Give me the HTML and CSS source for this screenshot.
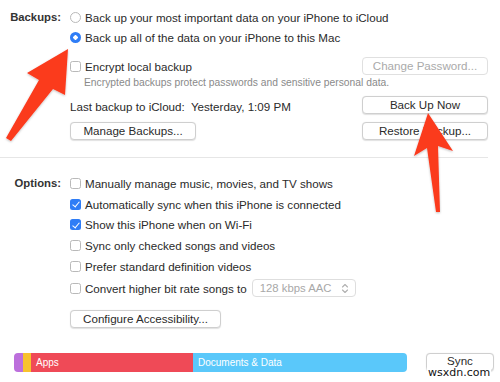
FILE: index.html
```html
<!DOCTYPE html>
<html>
<head>
<meta charset="utf-8">
<link rel="stylesheet" href="styles.css">
</head>
<body>
<div class="pane">
  <section class="group backups">
    <div class="label">Backups:</div>
    <div class="content">
      <div class="opt r1"><span class="radio"></span>Back up your most important data on your iPhone to iCloud</div>
      <div class="opt"><span class="radio on"></span>Back up all of the data on your iPhone to this Mac</div>
      <div class="split enc">
        <div class="opt"><span class="cb"></span>Encrypt local backup</div>
        <button class="btn wide" disabled>Change Password...</button>
      </div>
      <div class="hint">Encrypted backups protect passwords and sensitive personal data.</div>
      <div class="split last">
        <span class="txt">Last backup to iCloud:&nbsp; Yesterday, 1:09 PM</span>
        <button class="btn wide">Back Up Now</button>
      </div>
      <div class="split manage">
        <button class="btn wide">Manage Backups...</button>
        <button class="btn wide">Restore Backup...</button>
      </div>
    </div>
  </section>
  <div class="sep"></div>
  <section class="group options">
    <div class="label">Options:</div>
    <div class="content">
      <div class="opt row"><span class="cb"></span>Manually manage music, movies, and TV shows</div>
      <div class="opt row"><span class="cb on"></span>Automatically sync when this iPhone is connected</div>
      <div class="opt row"><span class="cb on"></span>Show this iPhone when on Wi-Fi</div>
      <div class="opt row"><span class="cb"></span>Sync only checked songs and videos</div>
      <div class="opt row"><span class="cb"></span>Prefer standard definition videos</div>
      <div class="opt row tall"><span class="cb"></span>Convert higher bit rate songs to
        <span class="popup">128 kbps AAC
          <svg class="updown" width="8" height="11" viewBox="0 0 8 11"><path d="M1.5 4 L4 1.5 L6.5 4 M1.5 7 L4 9.5 L6.5 7" fill="none" stroke="#b0b0b0" stroke-width="1.1" stroke-linecap="round" stroke-linejoin="round"/></svg>
        </span>
      </div>
      <button class="btn access">Configure Accessibility...</button>
    </div>
  </section>
  <footer class="foot">
    <div class="bar">
      <span class="seg purple"></span>
      <span class="seg yellow"></span>
      <span class="seg red">Apps</span>
      <span class="seg blue">Documents &amp; Data</span>
    </div>
    <button class="btn sync">Sync</button>
  </footer>
  <span class="watermark">wsxdn.com</span>
  <svg class="arrows" width="500" height="382" viewBox="0 0 500 382">
    <defs>
      <filter id="sh" x="-20%" y="-20%" width="140%" height="140%">
        <feDropShadow dx="0" dy="1" stdDeviation="1.2" flood-color="#000" flood-opacity="0.25"/>
      </filter>
    </defs>
    <polygon filter="url(#sh)" fill="#fb3a1f" points="68,49 65,95 53,89 11,141 6,138 39,80 27,73"/>
    <polygon filter="url(#sh)" fill="#fb3a1f" points="428,113 453,151 438,146 440,212 436,212 427,148 414,156"/>
  </svg>
</div>
</body>
</html>
```
FILE: styles.css
```css
* { box-sizing: border-box; }
html, body { margin: 0; padding: 0; background: #fff; }
body {
  font-family: "Liberation Sans", Arial, sans-serif;
  font-size: 11.6px;
  color: #2a2a2a;
}
.pane {
  position: relative;
  width: 500px;
  height: 382px;
  overflow: hidden;
}
.group {
  display: grid;
  grid-template-columns: 62px 418px;
  column-gap: 8px;
}
.label {
  text-align: right;
  font-weight: bold;
  color: #333;
  padding-right: 1px;
  font-size: 11.3px;
}
.backups { padding-top: 7px; }
.backups .label { line-height: 20px; }
.opt {
  display: flex;
  align-items: center;
  height: 20px;
  white-space: nowrap;
}
.radio {
  width: 11px; height: 11px;
  border-radius: 50%;
  border: 1px solid #b9b9b9;
  background: #fff;
  margin-right: 4px;
  flex: none;
}
.radio.on {
  border: none;
  background: #2f7df6 radial-gradient(circle, #fff 0 2px, transparent 2.4px);
}
.cb {
  width: 11px; height: 11px;
  border-radius: 2.5px;
  border: 1px solid #b9b9b9;
  background: #fff;
  margin-right: 4px;
  flex: none;
  position: relative;
}
.cb.on {
  border: none;
  background: #2f7df6;
}
.cb.on::after {
  content: "";
  position: absolute;
  left: 3.5px; top: 1.5px;
  width: 3px; height: 6px;
  border: solid #fff;
  border-width: 0 1.6px 1.6px 0;
  transform: rotate(40deg);
}
.split {
  display: flex;
  justify-content: space-between;
  align-items: center;
}
.enc { margin-top: 10px; height: 18px; }
.hint {
  margin-top: 2px;
  padding-left: 14px;
  font-size: 10.3px;
  line-height: 12px;
  color: #8a8a8a;
  white-space: nowrap;
}
.last { margin-top: 7px; height: 18px; }
.last .txt { padding-top: 3px; }
.manage { margin-top: 8px; height: 18px; }
.btn {
  font-family: inherit;
  font-size: 11.6px;
  color: #2a2a2a;
  height: 18px;
  padding: 0;
  background: #fff;
  border: 1px solid #cfcfcf;
  border-radius: 4px;
  box-shadow: 0 0.5px 1px rgba(0,0,0,0.12);
  line-height: 16px;
}
.btn.wide { width: 126px; }
.btn[disabled] {
  color: #aaa;
  border-color: #e0e0e0;
  box-shadow: none;
}
.sep {
  height: 1px;
  background: #e6e6e6;
  width: 488px;
  margin-top: 17px;
}
.options { padding-top: 15px; }
.options .label { line-height: 20.7px; }
.opt.row { height: 20.7px; }
.opt.tall { height: 24px; }
.popup {
  display: inline-flex;
  align-items: center;
  justify-content: space-between;
  margin-left: 5px;
  width: 104px;
  height: 18px;
  padding: 0 6px 0 7px;
  border: 1px solid #dedede;
  border-radius: 4px;
  color: #a8a8a8;
  font-size: 11.3px;
}
.btn.access {
  margin-top: 10px;
  width: 151px;
  justify-self: start;
}
.foot {
  position: absolute;
  left: 14px;
  top: 353px;
  display: flex;
  align-items: flex-start;
  gap: 19px;
}
.bar {
  display: flex;
  width: 393px;
  height: 19px;
  border-radius: 4px;
  overflow: hidden;
}
.seg {
  display: flex;
  align-items: center;
  color: #fff;
  font-size: 10px;
  padding-left: 5px;
}
.purple { width: 9px; background: #bc6fdc; padding: 0; }
.yellow { width: 8px; background: #f8c22d; padding: 0; }
.red { width: 162px; background: #ef4a57; }
.blue { flex: 1; background: #5ac8fa; }
.btn.sync {
  width: 68px;
  height: 18px;
  font-size: 11.6px;
  line-height: 12px;
  padding-bottom: 3px;
}
.watermark {
  position: absolute;
  left: 427px;
  top: 367px;
  background: #fff;
  color: #111;
  font-family: "DejaVu Sans", sans-serif;
  font-size: 11px;
  line-height: 12px;
  padding: 0 1px;
}
.arrows {
  position: absolute;
  left: 0; top: 0;
  pointer-events: none;
}
```
